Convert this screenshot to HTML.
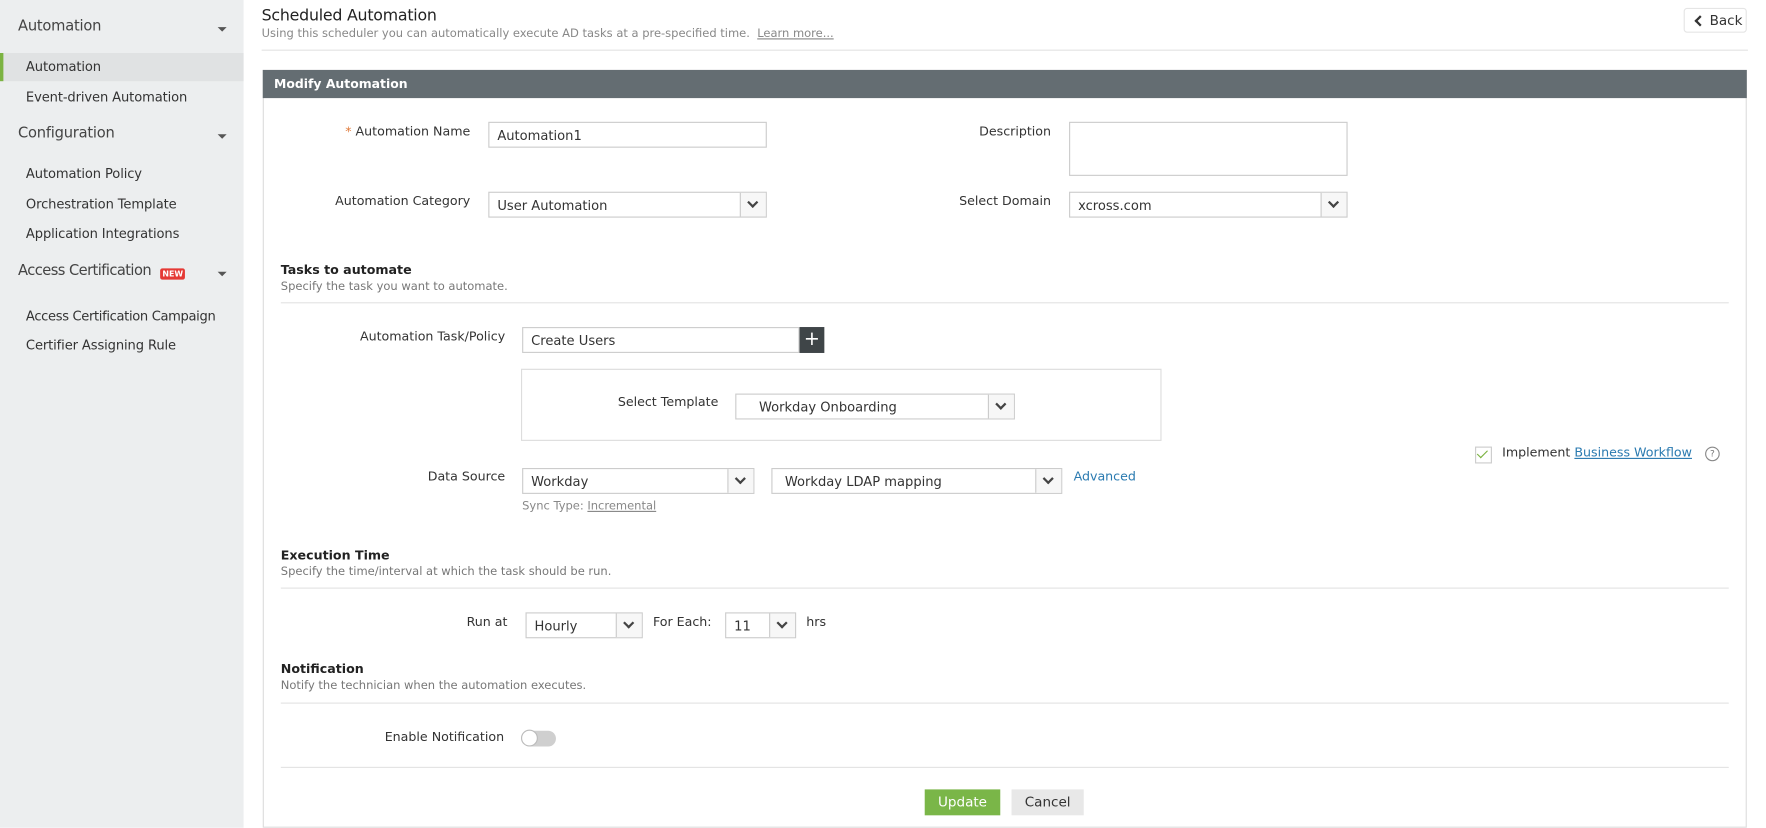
<!DOCTYPE html>
<html><head><meta charset="utf-8"><style>
html,body{margin:0;padding:0;width:1766px;height:828px;overflow:hidden;background:#fff}
#w{position:absolute;left:0;top:0;width:1566px;height:734px;transform:scale(1.1277);transform-origin:0 0;font-family:"DejaVu Sans","Liberation Sans",sans-serif;color:#333;font-size:11.2px}
.a{position:absolute;white-space:nowrap}
#sb{position:absolute;left:0;top:0;width:216px;height:734px;background:#eceeef}
.h{font-size:13px;color:#444;letter-spacing:-0.2px}
.s{font-size:11.6px;color:#333;letter-spacing:-0.1px}
.car{position:absolute;width:0;height:0;border-left:4px solid transparent;border-right:4px solid transparent;border-top:4px solid #555}
.lbl{position:absolute;text-align:right;white-space:nowrap}
.in{position:absolute;border:1px solid #ccc;background:#fff;box-sizing:border-box;padding-left:7px;font-size:11.6px;display:flex;align-items:center}
.dd{position:absolute;right:0;top:0;bottom:0;width:22px;border-left:1px solid #ccc;background:#f7f7f7}
.dd:after{content:"";position:absolute;left:7px;top:5px;width:5px;height:5px;border-right:2px solid #444;border-bottom:2px solid #444;transform:rotate(45deg)}
.sec{font-weight:bold;font-size:11.2px;color:#222}
.sub{font-size:10.2px;color:#777}
.ln{position:absolute;height:1px;background:#e3e3e3}
</style></head><body><div id="w">
<div id="sb">
<div class="a h" style="left:16px;top:16px">Automation</div><div class="car" style="left:193px;top:24px"></div>
<div class="a" style="left:0;top:47px;width:216px;height:25px;background:#e0e2e3;border-left:3px solid #7cb342;box-sizing:border-box"></div>
<div class="a s" style="left:23px;top:52px">Automation</div>
<div class="a s" style="left:23px;top:79px">Event-driven Automation</div>
<div class="a h" style="left:16px;top:111px">Configuration</div><div class="car" style="left:193px;top:119px"></div>
<div class="a s" style="left:23px;top:147px">Automation Policy</div>
<div class="a s" style="left:23px;top:174px">Orchestration Template</div>
<div class="a s" style="left:23px;top:200px">Application Integrations</div>
<div class="a h" style="left:16px;top:233px;letter-spacing:-0.5px">Access Certification</div>
<div class="a" style="left:142px;top:238px;background:#e53935;color:#fff;font-size:7px;font-weight:bold;padding:1px 2px;border-radius:2px">NEW</div>
<div class="car" style="left:193px;top:241px"></div>
<div class="a s" style="left:23px;top:273px;letter-spacing:-0.3px">Access Certification Campaign</div>
<div class="a s" style="left:23px;top:299px">Certifier Assigning Rule</div>
</div>

<div class="a" style="left:232px;top:6px;font-size:14px;color:#222;letter-spacing:-0.2px">Scheduled Automation</div>
<div class="a" style="left:232px;top:25px;font-size:10.2px;color:#888">Using this scheduler you can automatically execute AD tasks at a pre-specified time. &nbsp;<span style="text-decoration:underline">Learn more...</span></div>
<div class="ln" style="left:232px;top:44px;width:1318px"></div>
<div class="a" style="left:1493px;top:7px;width:56px;height:22px;border:1px solid #e5e5e5;box-sizing:border-box;border-radius:3px;font-size:12px;line-height:20px;padding-left:22px">Back</div>
<div class="a" style="left:1504px;top:15px;width:5px;height:5px;border-left:2px solid #333;border-bottom:2px solid #333;transform:rotate(45deg)"></div>

<div class="a" style="left:233px;top:62px;width:1316px;height:672px;border:1px solid #ddd;box-sizing:border-box"></div>
<div class="a" style="left:233px;top:62px;width:1316px;height:25px;background:#646d72;color:#fff;font-weight:bold;font-size:11px;line-height:25px;padding-left:10px;box-sizing:border-box">Modify Automation</div>

<div class="lbl" style="right:1149px;top:110px"><span style="color:#e07a3a">*</span> Automation Name</div>
<div class="in" style="left:433px;top:108px;width:247px;height:23px">Automation1</div>
<div class="lbl" style="right:634px;top:110px">Description</div>
<div class="in" style="left:948px;top:108px;width:247px;height:48px"></div>
<div class="lbl" style="right:1149px;top:172px">Automation Category</div>
<div class="in" style="left:433px;top:170px;width:247px;height:23px">User Automation<div class="dd"></div></div>
<div class="lbl" style="right:634px;top:172px">Select Domain</div>
<div class="in" style="left:948px;top:170px;width:247px;height:23px">xcross.com<div class="dd"></div></div>

<div class="a sec" style="left:249px;top:233px">Tasks to automate</div>
<div class="a sub" style="left:249px;top:249px">Specify the task you want to automate.</div>
<div class="ln" style="left:249px;top:268px;width:1284px"></div>

<div class="lbl" style="right:1118px;top:292px">Automation Task/Policy</div>
<div class="in" style="left:463px;top:290px;width:246px;height:23px">Create Users</div>
<div class="a" style="left:709px;top:290px;width:22px;height:23px;background:#3f4548;color:#fff;font-size:17px;line-height:22px;text-align:center">+</div>
<div class="a" style="left:462px;top:327px;width:568px;height:64px;border:1px solid #ddd;box-sizing:border-box"></div>
<div class="lbl" style="right:929px;top:350px">Select Template</div>
<div class="in" style="left:652px;top:349px;width:248px;height:23px;padding-left:20px">Workday Onboarding<div class="dd"></div></div>

<div class="a" style="left:1308px;top:396px;width:13px;height:13px;border:1px solid #ccc"></div>
<div class="a" style="left:1312px;top:397px;width:4px;height:8px;border-right:1.5px solid #7cb342;border-bottom:1.5px solid #7cb342;transform:rotate(45deg)"></div>
<div class="a" style="left:1332px;top:395px">Implement <span style="color:#2a7ab0;text-decoration:underline">Business Workflow</span></div>
<div class="a" style="left:1512px;top:396px;width:11px;height:11px;border:1px solid #888;border-radius:50%;font-size:8px;text-align:center;line-height:11px;color:#777">?</div>

<div class="lbl" style="right:1118px;top:416px">Data Source</div>
<div class="in" style="left:463px;top:415px;width:206px;height:23px">Workday<div class="dd"></div></div>
<div class="in" style="left:684px;top:415px;width:258px;height:23px;padding-left:11px">Workday LDAP mapping<div class="dd"></div></div>
<div class="a" style="left:952px;top:416px;color:#2a7ab0">Advanced</div>
<div class="a" style="left:463px;top:444px;font-size:10.2px;color:#888">Sync Type: <span style="text-decoration:underline">Incremental</span></div>

<div class="a sec" style="left:249px;top:486px">Execution Time</div>
<div class="a sub" style="left:249px;top:502px">Specify the time/interval at which the task should be run.</div>
<div class="ln" style="left:249px;top:521px;width:1284px"></div>
<div class="lbl" style="right:1116px;top:545px">Run at</div>
<div class="in" style="left:466px;top:543px;width:104px;height:23px">Hourly<div class="dd"></div></div>
<div class="a" style="left:579px;top:545px">For Each:</div>
<div class="in" style="left:643px;top:543px;width:63px;height:23px">11<div class="dd"></div></div>
<div class="a" style="left:715px;top:545px">hrs</div>

<div class="a sec" style="left:249px;top:587px">Notification</div>
<div class="a sub" style="left:249px;top:603px">Notify the technician when the automation executes.</div>
<div class="ln" style="left:249px;top:623px;width:1284px"></div>
<div class="lbl" style="right:1119px;top:647px">Enable Notification</div>
<div class="a" style="left:463px;top:648px;width:30px;height:14px;border-radius:7px;background:#cfcfcf"></div>
<div class="a" style="left:462px;top:647px;width:15px;height:15px;border-radius:50%;background:#fff;border:1px solid #bbb;box-sizing:border-box"></div>
<div class="ln" style="left:249px;top:680px;width:1284px"></div>
<div class="a" style="left:820px;top:700px;width:67px;height:23px;background:#7ab648;color:#fff;font-size:12px;line-height:23px;text-align:center">Update</div>
<div class="a" style="left:897px;top:700px;width:64px;height:23px;background:#e8e8e8;color:#333;font-size:12px;line-height:23px;text-align:center">Cancel</div>
</div></body></html>
